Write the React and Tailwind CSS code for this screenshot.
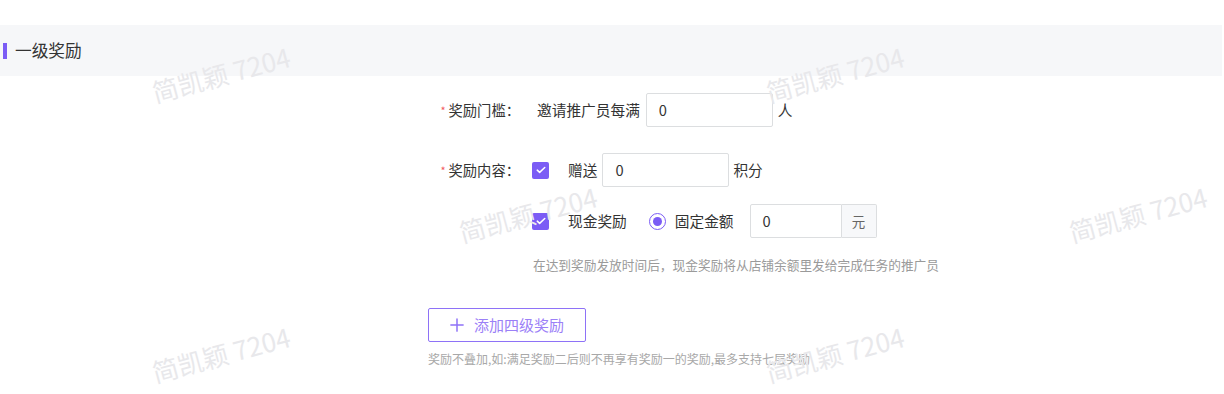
import React from "react"

// Reward tier editor: section header, two form rows, add-tier button.
const PURPLE = "bg-[#7b5cf5]"

function Watermark({ className }) {
  return (
    <span
      className={`pointer-events-none absolute -rotate-[15deg] select-none whitespace-nowrap text-[26px] text-[#e8e8eb] ${className}`}
    >
      简凯颖 7204
    </span>
  )
}

function Checkbox() {
  return (
    <span className={`flex h-[17px] w-[17px] shrink-0 items-center justify-center rounded-[2px] ${PURPLE}`}>
      <svg viewBox="0 0 16 16" className="h-3 w-3" fill="none">
        <path d="M3 8.2l3.2 3L13 4.6" stroke="white" strokeWidth="2" strokeLinecap="round" strokeLinejoin="round" />
      </svg>
    </span>
  )
}

function Radio() {
  return (
    <span className="flex h-[17px] w-[17px] shrink-0 items-center justify-center rounded-full border border-[#7b5cf5] bg-white">
      <span className={`h-[9px] w-[9px] rounded-full ${PURPLE}`} />
    </span>
  )
}

function Field() {
  return (
    <div className="flex h-[34px] w-[127px] items-center rounded-[2px] border border-[#dcdee0] bg-white pl-3 text-[14.7px] text-[#333]">
      0
    </div>
  )
}

function Label({ children }) {
  return (
    <div className="flex w-[92px] shrink-0 items-center justify-end text-[14.3px] text-[#333]">
      <span className="mr-[3px] text-[11px] text-[#f25c5c]">*</span>
      {children}
    </div>
  )
}

const text = "text-[14.7px] text-[#333]"

export default function App() {
  return (
    <div
      className="relative h-[394px] w-[1224px] overflow-hidden bg-white pt-[25px]"
      style={{ fontFamily: '"Noto Sans CJK SC", "Noto Sans", sans-serif' }}
    >
      <div className="flex h-[51px] w-[1222px] items-center bg-[#f6f7f9]">
        <span className={`ml-[3px] h-4 w-1 ${PURPLE}`} />
        <span className="ml-[8px] text-[16.7px] text-[#333]">一级奖励</span>
      </div>

      <div className="ml-[428px] mt-[17px] flex flex-col">
        {/* threshold */}
        <div className="flex h-[34px] items-center">
          <Label>奖励门槛：</Label>
          <span className={`ml-[17px] ${text}`}>邀请推广员每满</span>
          <div className="ml-[6px]">
            <Field />
          </div>
          <span className={`ml-[5px] ${text}`}>人</span>
        </div>

        {/* content */}
        <div className="mt-[26px] flex h-[34px] items-center">
          <Label>奖励内容：</Label>
          <span className="ml-[12px]">
            <Checkbox />
          </span>
          <span className={`ml-[19px] ${text}`}>赠送</span>
          <div className="ml-[5px]">
            <Field />
          </div>
          <span className={`ml-[4px] ${text}`}>积分</span>
        </div>

        <div className="ml-[104px] mt-[17px] flex h-[34px] items-center">
          <Checkbox />
          <span className={`ml-[19px] ${text}`}>现金奖励</span>
          <span className="ml-[22px]">
            <Radio />
          </span>
          <span className={`ml-[9px] ${text}`}>固定金额</span>
          <div className="ml-[16px] flex">
            <div className="flex h-[34px] w-[92px] items-center rounded-l-[2px] border border-[#dcdee0] bg-white pl-3 text-[14.7px] text-[#333]">
              0
            </div>
            <div className="flex h-[34px] w-[35px] items-center justify-center rounded-r-[2px] border border-l-0 border-[#dcdee0] bg-[#f7f8fa] text-[13.5px] text-[#666]">
              元
            </div>
          </div>
        </div>

        <p className="ml-[105px] mt-[18px] text-[12.7px] leading-[18px] text-[#9a9a9a]">
          在达到奖励发放时间后，现金奖励将从店铺余额里发给完成任务的推广员
        </p>

        <button
          type="button"
          className="mt-[34px] flex h-[34px] w-[158px] items-center justify-center gap-[10px] rounded-[2px] border border-[#8e72f7] bg-white text-[15px] text-[#9b80f7]"
        >
          <svg viewBox="0 0 16 16" className="h-[14px] w-[14px]" fill="none">
            <path d="M8 1v14M1 8h14" stroke="#8e72f7" strokeWidth="1.7" strokeLinecap="round" />
          </svg>
          添加四级奖励
        </button>

        <p className="mt-[8px] text-[12px] leading-[18px] text-[#a8a8a8]">
          奖励不叠加,如:满足奖励二后则不再享有奖励一的奖励,最多支持七层奖励
        </p>
      </div>

      <Watermark className="left-[150px] top-[54px]" />
      <Watermark className="left-[764px] top-[54px]" />
      <Watermark className="left-[457px] top-[194px]" />
      <Watermark className="left-[1067px] top-[194px]" />
      <Watermark className="left-[150px] top-[334px]" />
      <Watermark className="left-[764px] top-[334px]" />
    </div>
  )
}
